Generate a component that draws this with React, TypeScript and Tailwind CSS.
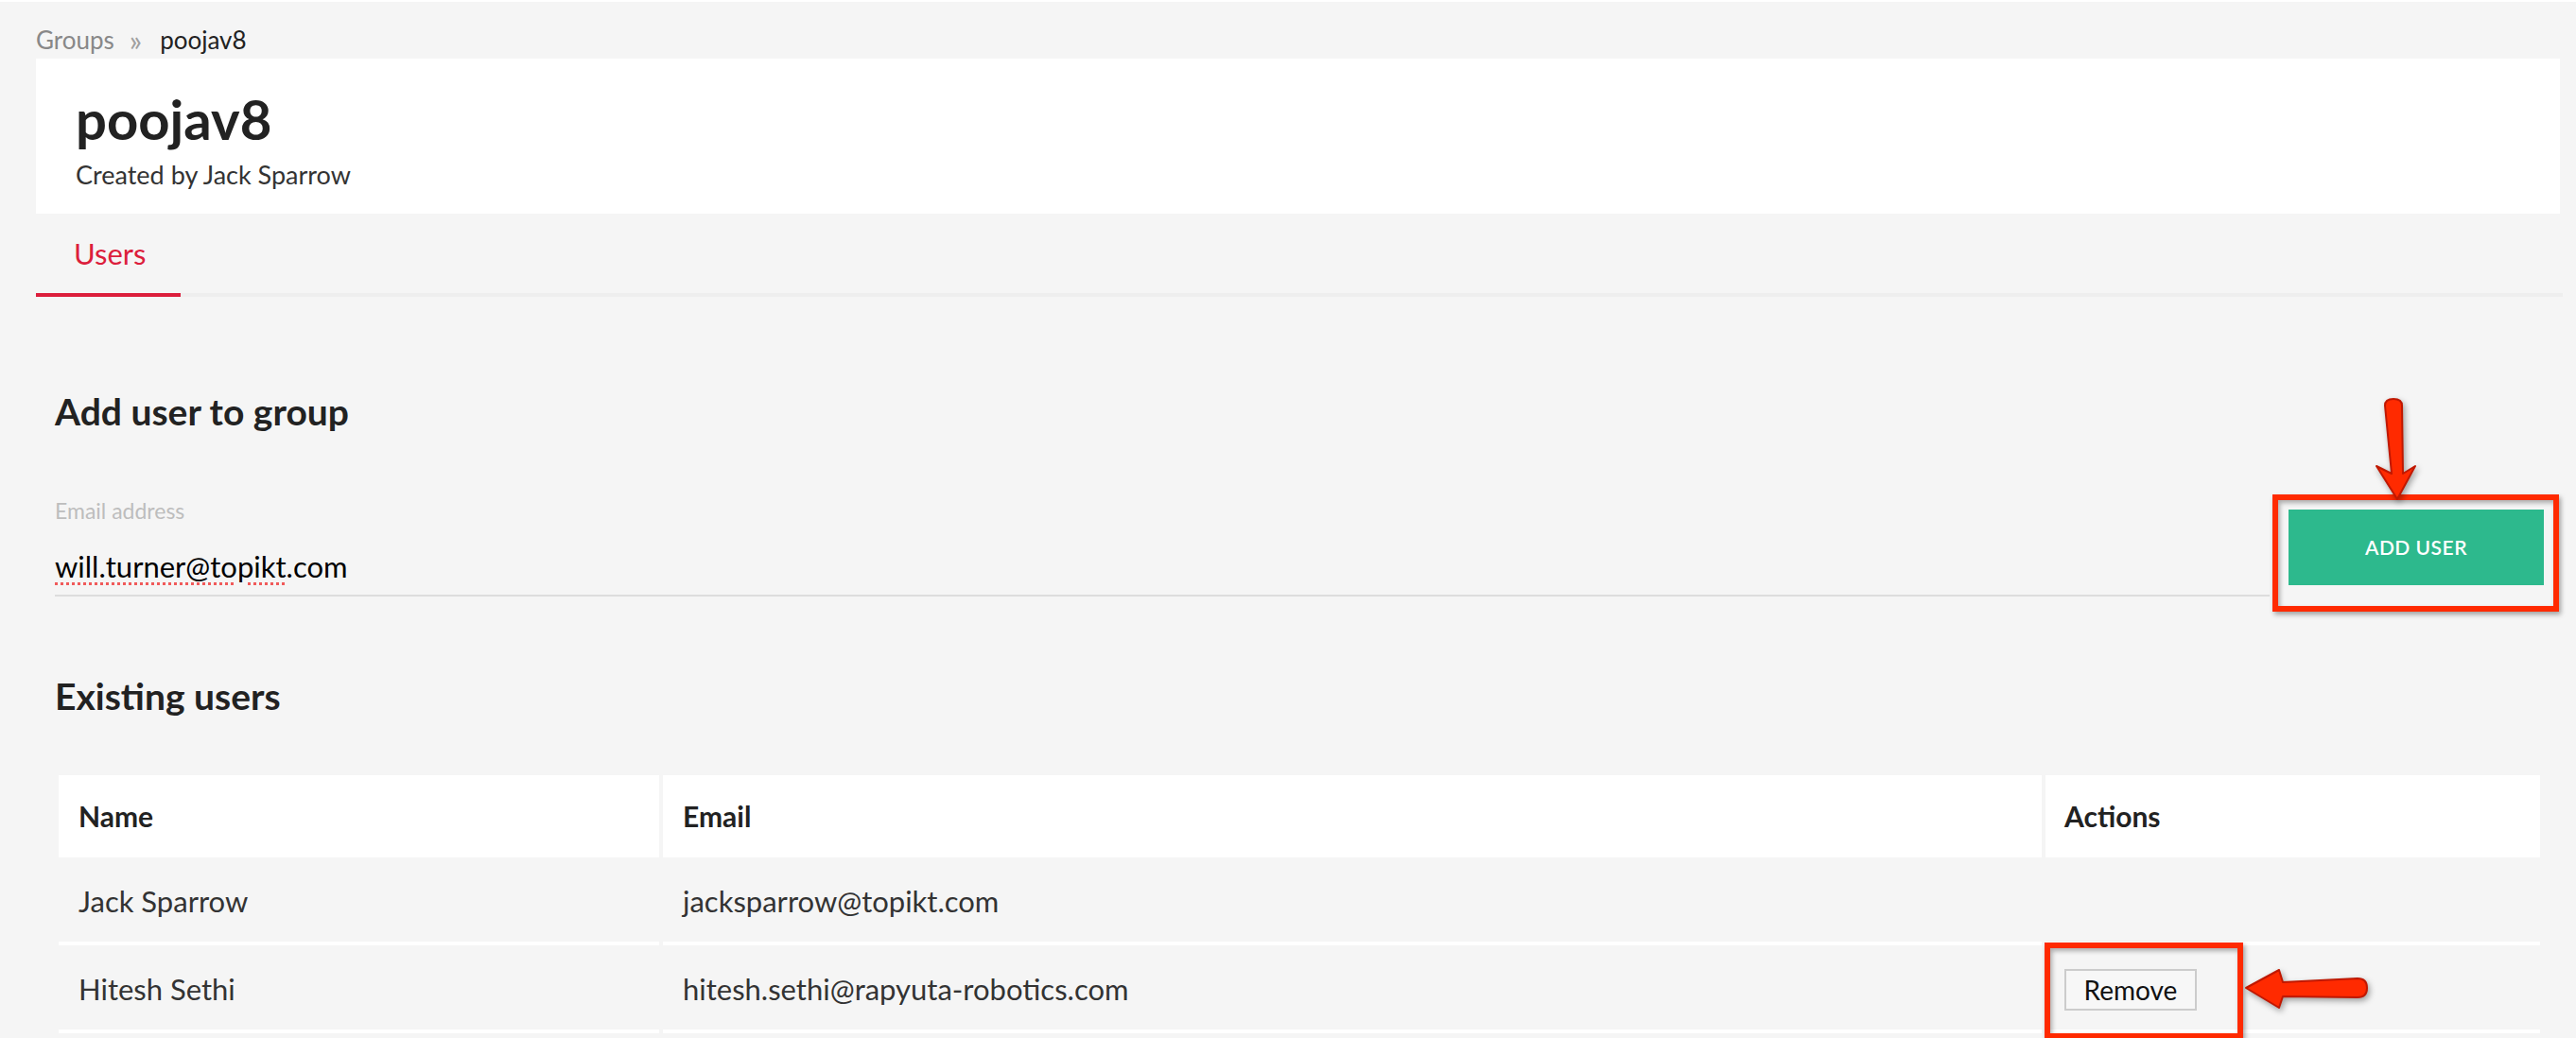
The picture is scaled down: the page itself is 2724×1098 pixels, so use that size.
import React from 'react';

const users = [
  { name: 'Jack Sparrow', email: 'jacksparrow@topikt.com', removable: false },
  { name: 'Hitesh Sethi', email: 'hitesh.sethi@rapyuta-robotics.com', removable: true },
];

// annotation arrows (screenshot markup)
const DownArrow = () => (
  <svg width="70" height="116" viewBox="0 0 70 116" className="drop-shadow-[2px_3px_3px_rgba(0,0,0,0.35)]">
    <path
      d="M22,12 Q22,5 31,5 Q40,5 40,12 L41,84 L54,76 L35,111 L13,76 L29,84 Z"
      fill="#ff2a00"
      stroke="#c01800"
      strokeWidth="2"
      strokeLinejoin="round"
    />
  </svg>
);

const LeftArrow = () => (
  <svg width="140" height="54" viewBox="0 0 140 54" className="drop-shadow-[2px_3px_3px_rgba(0,0,0,0.35)]">
    <path
      d="M5,25 L40,6 L44,19 L123,15 Q133,15 133,25 Q133,35 123,35 L44,34 L40,46 Z"
      fill="#ff2a00"
      stroke="#c01800"
      strokeWidth="2"
      strokeLinejoin="round"
    />
  </svg>
);

const App = () => {
  return (
    <div className="relative min-h-screen w-full overflow-hidden border-t-2 border-white bg-[#f5f5f5] font-['Lato','Liberation_Sans',sans-serif] text-[#222]">
      {/* Breadcrumb */}
      <div className="flex h-[60px] items-start pl-[38px] pt-[22px] text-[26px] leading-[36px]">
        <span className="text-[#888]">Groups</span>
        <span className="ml-[16px] mr-[19px] text-[31px] text-[#a0a0a0]">»</span>
        <span className="text-[#222]">poojav8</span>
      </div>

      {/* Group header card */}
      <div className="ml-[38px] mr-[17px] h-[164px] bg-white pl-[42px] pt-[32px]">
        <h1 className="text-[58px] font-bold leading-[64px] text-[#222]">poojav8</h1>
        <p className="mt-[9px] text-[27px] leading-[36px] text-[#333]">Created by Jack Sparrow</p>
      </div>

      {/* Tabs */}
      <div className="ml-[38px] mr-[14px] flex border-b-4 border-[#eeeeee]">
        <div className="-mb-[4px] w-[153px] border-b-4 border-[#dc1e3c] pb-[22px] pl-[40px] pt-[22px] text-[31px] leading-[40px] text-[#dc1e3c]">
          Users
        </div>
      </div>

      <div className="pl-[58px] pr-[34px]">
        {/* Add user */}
        <h2 className="mt-[99px] text-[39px] font-bold leading-[44px] text-[#222]">Add user to group</h2>

        <div className="mt-[62px] flex items-start">
          <div className="flex-1 border-b-2 border-[#dddddd] pb-[10px] pt-[6px]">
            <div className="text-[23px] leading-[30px] text-[#bdbdbd]">Email address</div>
            <div className="mt-[24px] text-[31px] leading-[40px] text-black">
              <span className="underline decoration-[#f05a5a] decoration-dotted decoration-3 underline-offset-[5px]">
                will.turner@topikt
              </span>
              .com
            </div>
          </div>
          <button className="ml-[20px] mt-[20px] flex h-[80px] w-[270px] items-center justify-center bg-[#2db98d] text-[21px] font-semibold tracking-[0.5px] text-white">
            ADD USER
          </button>
        </div>

        {/* Existing users */}
        <h2 className="mt-[83px] text-[39px] font-bold leading-[44px] text-[#222]">Existing users</h2>

        <div className="mx-[4px] mt-[62px] grid grid-cols-[635px_1fr_523px] gap-x-[4px] text-[#333]">
          <div className="flex h-[87px] items-center bg-white px-[21px] text-[30px] font-bold text-[#222]">Name</div>
          <div className="flex h-[87px] items-center bg-white px-[21px] text-[30px] font-bold text-[#222]">Email</div>
          <div className="flex h-[87px] items-center bg-white px-[20px] text-[30px] font-bold text-[#222]">Actions</div>

          {users.map((u) => (
            <React.Fragment key={u.email}>
              <div className="flex h-[93px] items-center border-b-4 border-white px-[21px] pt-[4px] text-[31px]">{u.name}</div>
              <div className="flex h-[93px] items-center border-b-4 border-white px-[21px] pt-[4px] text-[31px]">{u.email}</div>
              <div className="flex h-[93px] items-center border-b-4 border-white px-[20px] pt-[4px]">
                {u.removable && (
                  <button className="flex h-[44px] w-[140px] items-center justify-center border-2 border-[#cccccc] bg-[#f7f7f7] text-[28px] text-[#111]">
                    Remove
                  </button>
                )}
              </div>
            </React.Fragment>
          ))}
        </div>
      </div>

      {/* Markup overlays */}
      <div className="pointer-events-none absolute left-[2403px] top-[521px] h-[124px] w-[303px] border-[6px] border-[#ff2a00] shadow-[2px_3px_5px_rgba(0,0,0,0.35),inset_2px_3px_5px_rgba(0,0,0,0.3)]" />
      <div className="pointer-events-none absolute left-[2500px] top-[415px]">
        <DownArrow />
      </div>
      <div className="pointer-events-none absolute left-[2162px] top-[995px] h-[102px] w-[210px] border-[6px] border-[#ff2a00] shadow-[2px_3px_5px_rgba(0,0,0,0.35),inset_2px_3px_5px_rgba(0,0,0,0.3)]" />
      <div className="pointer-events-none absolute left-[2370px] top-[1018px]">
        <LeftArrow />
      </div>
    </div>
  );
};

export default App;
